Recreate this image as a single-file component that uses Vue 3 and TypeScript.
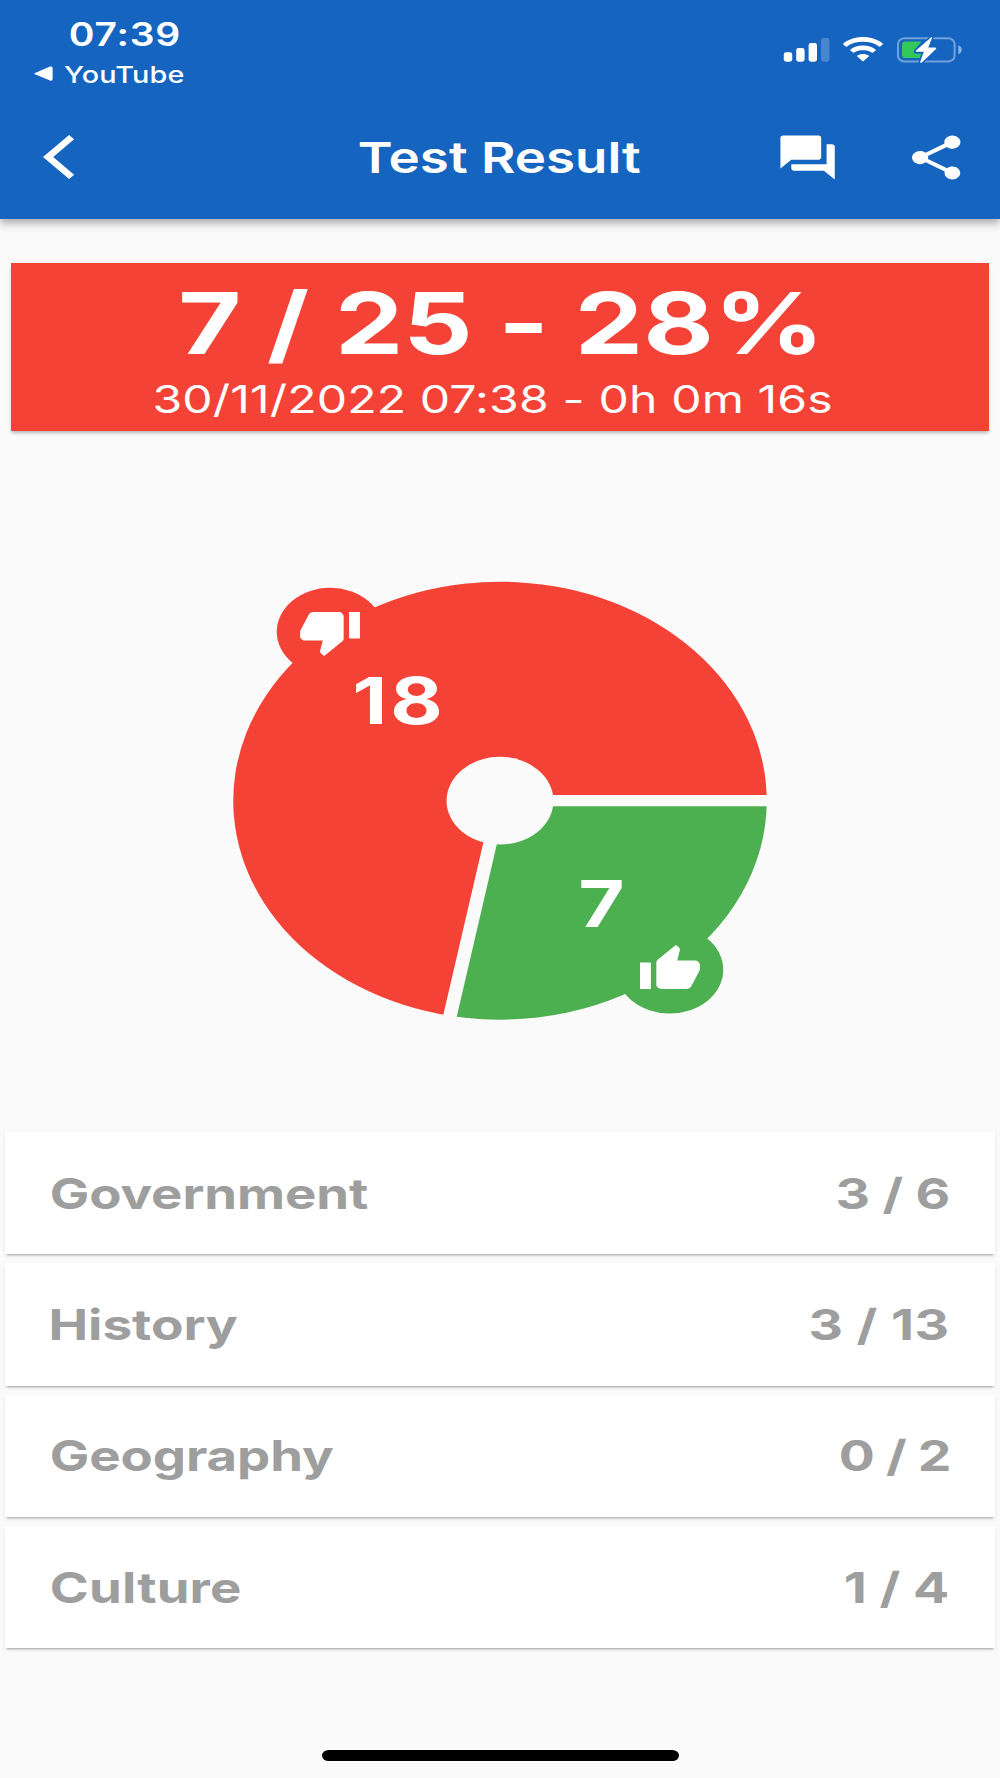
<script setup lang="ts">
interface TextSpec {
  text: string
  size: number
  weight: number
  width: number
  stretch: number
}

interface Category {
  name: TextSpec
  score: TextSpec
}

// Horizontal stretch of the glyphs on this display.
const STRETCH = 1.218
const FAMILY = 'Inter, Roboto, sans-serif'

const ctx = document.createElement('canvas').getContext('2d')!

function label(text: string, size: number, weight: number, width: number, stretch = STRETCH): TextSpec {
  return { text, size, weight, width, stretch }
}

// Tracks the glyphs so that their ink fills exactly the label's width.
function fit(spec: TextSpec) {
  ctx.font = `${spec.weight} ${spec.size}px ${FAMILY}`
  const m = ctx.measureText(spec.text)
  const ink = m.actualBoundingBoxLeft + m.actualBoundingBoxRight
  const gaps = spec.text.length - 1
  const scale = gaps ? spec.stretch : spec.width / ink
  const spacing = gaps ? (spec.width / scale - ink) / gaps : 0
  return {
    fontSize: `${spec.size}px`,
    fontWeight: spec.weight,
    letterSpacing: `${spacing}px`,
    transform: `translateX(${m.actualBoundingBoxLeft * scale}px) scaleX(${scale})`,
  }
}

const time = label('07:39', 32, 590, 108.5)
const backApp = label('YouTube', 23.4, 500, 119.5, 1.23)
const title = label('Test Result', 43, 590, 281.5, 1.23)
const score = label('7 / 25 - 28%', 85.5, 665, 633.5, 1.27)
const detail = label('30/11/2022 07:38 - 0h 0m 16s', 38.5, 405, 676, 1.25)
const wrong = label('18', 64, 670, 84.5, 1.26)
const right = label('7', 64, 660, 40.8)

const categories: Category[] = [
  { name: label('Government', 42.8, 650, 316.5, 1.23), score: label('3 / 6', 42.8, 650, 110, 1.25) },
  { name: label('History', 42.8, 650, 187, 1.24), score: label('3 / 13', 42.8, 650, 136, 1.25) },
  { name: label('Geography', 42.8, 650, 283, 1.23), score: label('0 / 2', 42.8, 650, 109, 1.25) },
  { name: label('Culture', 42.8, 650, 188.5, 1.23), score: label('1 / 4', 42.8, 650, 103, 1.25) },
]
const scoreInset = [47, 47.5, 45.5, 47]
</script>

<template>
  <div class="screen">
    <header class="header">
      <div class="status">
        <div class="status-left">
          <div class="label time" :style="{ width: time.width + 'px' }"><span :style="fit(time)">{{ time.text }}</span></div>
          <div class="back-app">
            <svg width="19" height="16" viewBox="0 0 19 16"><path d="M1 7 16 .6Q18.6 0 18.6 2V13Q18.6 15.4 16 14.6L1 8.3Q-.3 7.6 1 7Z" fill="#fff" /></svg>
            <div class="label" :style="{ width: backApp.width + 'px' }"><span :style="fit(backApp)">{{ backApp.text }}</span></div>
          </div>
        </div>
        <svg class="status-icons" width="180" height="28" viewBox="783 36 180 28">
          <g fill="#fff">
            <rect x="783.8" y="52.3" width="8.4" height="9.4" rx="2.4" />
            <rect x="796.2" y="48" width="8.4" height="13.7" rx="2.4" />
            <rect x="808.6" y="43" width="8.4" height="18.7" rx="2.4" />
            <rect x="821" y="38" width="8.4" height="23.7" rx="2.4" opacity=".22" />
            <path d="M863 37c7.800 0 14.700 2.500 19.700 6.400q.6.500 0 1l-2.500 2q-.6.500-1.200 0c-4.300-3.300-9.900-4.700-16-4.700s-11.700 1.400-16 4.700q-.6.500-1.200 0l-2.500-2q-.6-.5 0-1c5-3.900 11.900-6.400 19.700-6.400z" />
            <path d="M863 45.500c4.900 0 9.300 1.500 12.600 4q.6.500 0 1l-2.600 2q-.6.500-1.200 0c-2.400-1.700-5.400-2.300-8.800-2.300s-6.400.6-8.800 2.300q-.6.500-1.200 0l-2.600-2q-.6-.5 0-1c3.300-2.500 7.700-4 12.600-4z" />
            <path d="M863 53.900c2.200 0 4.200.6 5.700 1.700q.6.500 0 1l-5.100 4.500q-.6.500-1.200 0l-5.100-4.500q-.6-.5 0-1c1.500-1.100 3.500-1.700 5.700-1.700z" />
          </g>
          <rect x="898" y="38.300" width="56.600" height="23.100" rx="6.500" ry="5.500" fill="none" stroke="#fff" stroke-opacity=".4" stroke-width="2" />
          <path d="M958.300 45.300c4.600 1.500 4.600 7.400 0 8.900z" fill="#fff" fill-opacity=".5" />
          <path d="M905.500 41.600H921.500L915 49.500Q912.500 53 915 53.500H922L920.500 58.100H905.500Q902 58.100 902 55V44.700Q902 41.600 905.500 41.600Z" fill="#34c759" />
          <path d="M931.500 37 916 50.500q-1 1.300.8 1.300h7l-3.700 10.400q.6 1.200 2 .1L936 49q.9-1.500-1-1.500h-6.700l3.900-10.200z" fill="#fff" stroke="#1565c0" stroke-width="3.200" paint-order="stroke" />
        </svg>
      </div>
      <nav class="nav">
        <svg class="nav-back" width="32" height="46" viewBox="0 0 32 46"><path d="M26.100 1 31.100 5.200 10.200 23 31.100 40.800 26.100 45 0 23Z" fill="#fff" /></svg>
        <div class="label" :style="{ width: title.width + 'px' }"><span :style="fit(title)">{{ title.text }}</span></div>
        <div class="actions">
          <svg width="65.200" height="53" viewBox="0 0 24 24" preserveAspectRatio="none"><path fill="#fff" d="M21 6h-2v9H6v2c0 .55.45 1 1 1h11l4 4V7c0-.55-.45-1-1-1zm-4 6V3c0-.55-.45-1-1-1H3c-.55 0-1 .45-1 1v14l4-4h10c.55 0 1-.45 1-1z" /></svg>
          <svg width="64.500" height="53" viewBox="0 0 24 24" preserveAspectRatio="none"><path fill="#fff" d="M18 16.080c-.76 0-1.440.3-1.960.77L8.910 12.700c.05-.23.09-.46.09-.7s-.04-.47-.09-.7l7.050-4.110c.54.5 1.250.81 2.040.81 1.660 0 3-1.340 3-3s-1.340-3-3-3-3 1.340-3 3c0 .24.04.47.09.7L8.040 9.810C7.500 9.310 6.790 9 6 9c-1.660 0-3 1.340-3 3s1.340 3 3 3c.79 0 1.500-.31 2.040-.81l7.120 4.160c-.05.21-.08.43-.08.65 0 1.610 1.310 2.920 2.920 2.920 1.610 0 2.920-1.310 2.920-2.920s-1.310-2.920-2.920-2.920z" /></svg>
        </div>
      </nav>
    </header>

    <section class="banner">
      <div class="label score" :style="{ width: score.width + 'px' }"><span :style="fit(score)">{{ score.text }}</span></div>
      <div class="label detail" :style="{ width: detail.width + 'px' }"><span :style="fit(detail)">{{ detail.text }}</span></div>
    </section>

    <section class="chart">
      <svg width="534" height="440" viewBox="233 581 534 440">
        <g transform="translate(500 800.700) scale(1.218 1)">
          <path d="M0 0L-41.040 215.120A219 219 0 1 1 219 0Z" fill="#f44336" />
          <path d="M0 0H219A219 219 0 0 1 -41.040 215.120Z" fill="#4caf50" />
          <path d="M0 0H224M0 0-41.970 220.030" stroke="#fafafa" stroke-width="11.200" />
          <circle r="43.900" fill="#fafafa" />
          <circle cx="-139.400" cy="-169" r="43.900" fill="#f44336" />
          <circle cx="139.400" cy="169" r="43.900" fill="#4caf50" />
        </g>
        <path transform="translate(297.400 605.400) scale(2.720 2.200)" fill="#fff" d="M15 3H6c-.83 0-1.540.5-1.840 1.220l-3.020 7.050c-.09.23-.14.47-.14.73v2c0 1.100.9 2 2 2h6.310l-.95 4.570-.03.32c0 .41.17.79.44 1.060L9.830 23l6.590-6.590c.36-.36.58-.86.58-1.410V5c0-1.100-.9-2-2-2zm4 0v12h4V3h-4z" />
        <path transform="translate(637.300 942.800) scale(2.720 2.200)" fill="#fff" d="M1 21h4V9H1v12zm22-11c0-1.100-.9-2-2-2h-6.310l.95-4.570.03-.32c0-.41-.17-.79-.44-1.060L14.170 1 7.590 7.590C7.220 7.950 7 8.450 7 9v10c0 1.100.9 2 2 2h9c.83 0 1.540-.5 1.840-1.220l3.020-7.050c.09-.23.14-.47.14-.73v-2z" />
      </svg>
      <div class="label value wrong" :style="{ width: wrong.width + 'px' }"><span :style="fit(wrong)">{{ wrong.text }}</span></div>
      <div class="label value right" :style="{ width: right.width + 'px' }"><span :style="fit(right)">{{ right.text }}</span></div>
    </section>

    <ul class="categories">
      <li v-for="(c, i) in categories" :key="c.name.text" class="card" :style="{ paddingRight: scoreInset[i] + 'px' }">
        <div class="label" :style="{ width: c.name.width + 'px' }"><span :style="fit(c.name)">{{ c.name.text }}</span></div>
        <div class="label" :style="{ width: c.score.width + 'px' }"><span :style="fit(c.score)">{{ c.score.text }}</span></div>
      </li>
    </ul>

    <div class="home-bar"></div>
  </div>
</template>

<style>
body {
  background: #fafafa;
}
</style>

<style scoped>
.screen {
  width: 1000px;
  height: 1778px;
  overflow: hidden;
  display: flex;
  flex-direction: column;
  align-items: center;
  background: #fafafa;
  color: #fff;
  font-family: Inter, Roboto, sans-serif;
}

.label {
  flex: none;
  display: flex;
  align-items: center;
  white-space: pre;
}

.label span {
  display: block;
  flex: none;
  transform-origin: 0 50%;
}

.header {
  width: 100%;
  height: 218.6px;
  flex: none;
  background: #1565c0;
  box-shadow: 0 5px 8px rgba(0, 0, 0, 0.25), 0 1px 8px rgba(0, 0, 0, 0.1);
}

.status {
  height: 96px;
  display: flex;
  justify-content: space-between;
}

.status-left {
  padding: 14.5px 0 0 34px;
}

.time {
  height: 40px;
  margin-left: 36px;
}

.back-app {
  height: 28px;
  margin-top: 5.5px;
  display: flex;
  align-items: center;
  gap: 10.8px;
}

.status-icons {
  margin: 36px 37px 0 0;
}

.nav {
  height: 122px;
  display: grid;
  grid-template-columns: 1fr auto 1fr;
  align-items: center;
}

.nav-back {
  margin-left: 43px;
}

.actions {
  display: flex;
  justify-content: flex-end;
  gap: 63px;
  padding-right: 32px;
}

.banner {
  width: 978px;
  height: 168.3px;
  flex: none;
  margin-top: 44px;
  display: flex;
  flex-direction: column;
  background: #f44336;
  box-shadow: 0 3px 3px -1px rgba(0, 0, 0, 0.22), 0 1px 5px rgba(0, 0, 0, 0.09);
}

.score {
  height: 100px;
  margin: 10.9px 0 0 170.5px;
}

.detail {
  height: 42px;
  margin: 5px 0 0 143.5px;
}

.chart {
  position: relative;
  width: 534px;
  height: 440px;
  flex: none;
  margin-top: 150.1px;
}

.chart svg {
  display: block;
}

.value {
  position: absolute;
  height: 70px;
}

.wrong {
  left: 121.5px;
  top: 84.7px;
}

.right {
  left: 347.7px;
  top: 287.2px;
}

.categories {
  width: 989.4px;
  margin: 111px 0 0;
  padding: 0;
  list-style: none;
  display: flex;
  flex-direction: column;
  gap: 9.2px;
}

.card {
  box-sizing: border-box;
  height: 122.2px;
  padding-left: 45.7px;
  display: flex;
  align-items: center;
  justify-content: space-between;
  background: #fff;
  color: #9e9e9e;
  box-shadow: 0 3px 2px -2px rgba(0, 0, 0, 0.3), 0 2px 4px rgba(0, 0, 0, 0.08);
}

.home-bar {
  width: 357px;
  height: 11px;
  margin-top: 101.700px;
  flex: none;
  border-radius: 6.7px / 5.5px;
  background: #000;
}
</style>
